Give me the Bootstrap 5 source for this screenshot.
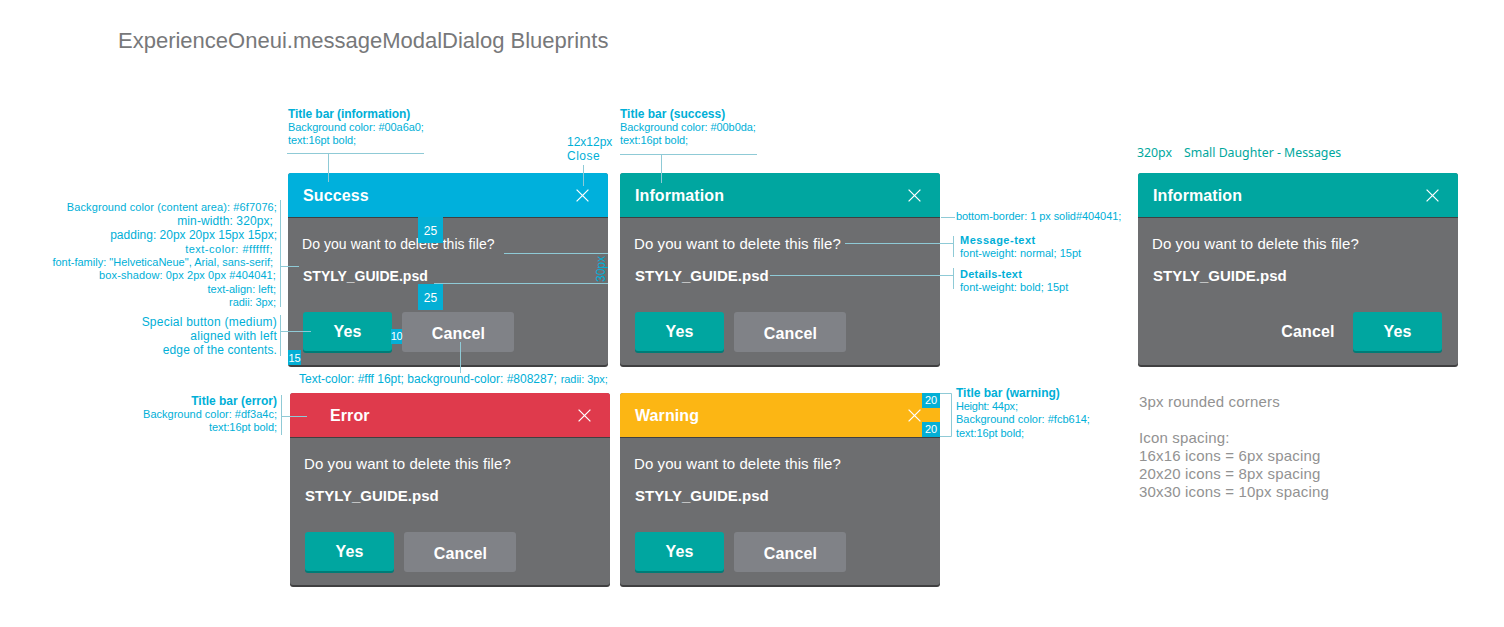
<!DOCTYPE html>
<html lang="en">
<head>
<meta charset="utf-8">
<meta name="viewport" content="width=device-width, initial-scale=1">
<title>ExperienceOneui.messageModalDialog Blueprints</title>
<link rel="stylesheet" href="https://cdn.jsdelivr.net/npm/bootstrap@5.3.0/dist/css/bootstrap.min.css">
<style>
  :root { --ink: #00afd7; --rule: #8fcad6; --teal: #00a6a0; --edge: #404041; }
  body { font-family: "Liberation Sans", Arial, sans-serif; background: #fff; }
  .board { width: 1504px; height: 627px; }
  .board-head { height: 100px; padding: 28px 0 0 118px; }
  .board-title { font-size: 22px; line-height: 26px; color: #77787a; }

  /* annotation text */
  .ann { font-size: 11px; line-height: 13px; color: var(--ink); white-space: nowrap; }
  .ann .l12 { font-size: 12px; line-height: 14px; }
  .ann .h14 { line-height: 14px; }
  .ann .h15 { line-height: 15px; }
  .ann .tight { letter-spacing: -.07px; }
  .ann .tighter { letter-spacing: -.24px; }
  .ann .open1 { letter-spacing: .1px; }
  .ann .open2 { letter-spacing: .23px; }
  .ann .open4 { letter-spacing: .5px; }
  .in1 { padding-right: 1px; }
  .in4 { padding-right: 4px; }

  .col-left { width: 288px; padding: 101px 11px 0 0; }
  .col-dialogs { width: 652px; }
  .col-right { width: 198px; padding-top: 110px; }
  .col-side { width: 320px; }
  .top-notes { height: 73px; padding-top: 7px; }
  .top-notes .n1 { width: 279px; }
  .top-notes .n2 { width: 53px; padding-top: 28px; }
  .between { height: 28px; padding: 7px 0 0 11px; }
  .row-a { gap: 12px; }
  .row-b { gap: 10px; padding-left: 2px; }
  .mt-a { margin-top: 1px; } .mt-b { margin-top: 6px; } .mt-c { margin-top: 36px; }
  .mt-d { margin-top: 11px; } .mt-e { margin-top: 8px; } .mt-f { margin-top: 92px; }

  /* dialogs */
  .dlg { width: 320px; height: 192px; border-radius: 3px; background: #6d6e70; box-shadow: 0 2px 0 var(--edge); color: #fff; }
  .dlg-bar { height: 45px; border-bottom: 1px solid var(--edge); border-radius: 3px 3px 0 0; padding: 0 19px 0 15px; font-size: 16px; font-weight: 700; letter-spacing: .1px; }
  .dlg-name { padding-top: 2px; }
  .dlg-bar svg { width: 13px; height: 13px; display: block; }
  .bar-success { background: #00b0dc; }
  .bar-info { background: var(--teal); }
  .bar-error { background: #df3a4c; }
  .bar-error .dlg-name { padding-left: 25px; }
  .bar-warning { background: #fcb614; }
  .dlg-body { padding: 16px 15px 0 14px; font-size: 15px; letter-spacing: .08px; line-height: 20px; }
  .dlg-compact .dlg-body { font-size: 14px; letter-spacing: .06px; }
  .dlg-file { padding: 12px 0 0 1px; letter-spacing: 0; }
  .dlg-actions { padding: 26px 0 0 1px; gap: 10px; }
  .act { border: 0; border-radius: 3px; height: 40px; padding: 0; font-size: 16px; font-weight: 700; line-height: 40px; color: #fff; letter-spacing: .15px; }
  .act-yes { width: 89px; height: 39px; background: var(--teal); box-shadow: 0 2px 0 #007c77; line-height: 39px; }
  .act-cancel { width: 112px; background: #808287; padding: 2px 0 0 1px; }
  .act-plain { width: 71px; height: 39px; line-height: 39px; background: transparent; padding-right: 1px; }
  .col-side .dlg-actions { gap: 9px; padding-right: 1px; }

  .side-cap { height: 73px; padding-top: 45px; font: 12.3px/15px "Noto Sans", sans-serif; color: #00a79d; gap: 12px; margin-left: -1px; }
  .side-notes { margin: 28px 0 0 1px; font-size: 15px; line-height: 18px; letter-spacing: .17px; color: #929292; }
  .side-notes p { margin-bottom: 18px; }

  /* overlays on top of the dialogs */
  .links { left: 0; top: 0; pointer-events: none; }
  .tag { position: absolute; background: #04afd5; color: #fff; font-size: 12px; display: flex; align-items: center; justify-content: center; }
  .tag-25a { left: 418px; top: 217px; width: 25px; height: 26px; padding-top: 1px; }
  .tag-25b { left: 418px; top: 284px; width: 25px; height: 26px; padding-top: 1px; }
  .tag-10 { left: 391px; top: 329px; width: 11px; height: 15px; font-size: 11px; letter-spacing: -.4px; }
  .tag-15 { left: 288px; top: 350px; width: 13px; height: 15px; font-size: 11px; padding-top: 1px; }
  .tag-20a { left: 922px; top: 393px; width: 18px; height: 15px; font-size: 11px; }
  .tag-20b { left: 922px; top: 422px; width: 18px; height: 15px; font-size: 11px; }
  .tag-gap { left: 594px; top: 255px; width: 14px; height: 27px; background: none; color: var(--ink); writing-mode: vertical-rl; transform: rotate(180deg); }
</style>
<script src="https://cdn.jsdelivr.net/npm/bootstrap@5.3.0/dist/js/bootstrap.bundle.min.js"></script>
</head>
<body>
<svg class="d-none"><symbol id="close" viewBox="0 0 13 13"><path d="M.6.6 12.4 12.4M12.4.6.6 12.4" stroke="#fff" stroke-width="1.25" fill="none"/></symbol></svg>

<div class="board position-relative overflow-hidden">
  <header class="board-head"><h1 class="board-title fw-normal m-0">ExperienceOneui.messageModalDialog Blueprints</h1></header>

  <main class="d-flex align-items-start">
    <aside class="col-left ann text-end flex-shrink-0">
      <div class="open1">Background color (content area): #6f7076;</div>
      <div class="l12 open1 in4">min-width: 320px;</div>
      <div class="l12 h15">padding: 20px 20px 15px 15px;</div>
      <div class="open4 in4">text-color: #ffffff;</div>
      <div class="in4">font-family: "HelveticaNeue", Arial, sans-serif;</div>
      <div class="open1 in1">box-shadow: 0px 2px 0px #404041;</div>
      <div class="mt-a in1">text-align: left;</div>
      <div class="tight in1">radii: 3px;</div>
      <div class="l12 open2 mt-b">Special button (medium)</div>
      <div class="l12 open2">aligned with left</div>
      <div class="l12 h15 open1">edge of the contents.</div>
      <div class="l12 fw-bold mt-c">Title bar (error)</div>
      <div>Background color: #df3a4c;</div>
      <div class="tight">text:16pt bold;</div>
    </aside>

    <section class="col-dialogs flex-shrink-0">
      <div class="top-notes d-flex ann">
        <div class="n1">
          <div class="l12 fw-bold tight">Title bar (information)</div>
          <div class="tight">Background color: #00a6a0;</div>
          <div class="tight">text:16pt bold;</div>
        </div>
        <div class="n2">
          <div class="l12">12x12px</div>
          <div class="l12 open4">Close</div>
        </div>
        <div>
          <div class="l12 fw-bold">Title bar (success)</div>
          <div class="tight">Background color: #00b0da;</div>
          <div class="tight">text:16pt bold;</div>
        </div>
      </div>

      <div class="row-a d-flex">
        <article class="dlg dlg-compact">
          <div class="dlg-bar bar-success d-flex align-items-center justify-content-between"><span class="dlg-name">Success</span><svg><use href="#close"/></svg></div>
          <div class="dlg-body">
            <div>Do you want to delete this file?</div>
            <div class="dlg-file fw-bold">STYLY_GUIDE.psd</div>
            <div class="dlg-actions d-flex"><button class="act act-yes">Yes</button><button class="act act-cancel">Cancel</button></div>
          </div>
        </article>
        <article class="dlg">
          <div class="dlg-bar bar-info d-flex align-items-center justify-content-between"><span class="dlg-name">Information</span><svg><use href="#close"/></svg></div>
          <div class="dlg-body">
            <div>Do you want to delete this file?</div>
            <div class="dlg-file fw-bold">STYLY_GUIDE.psd</div>
            <div class="dlg-actions d-flex"><button class="act act-yes">Yes</button><button class="act act-cancel">Cancel</button></div>
          </div>
        </article>
      </div>

      <div class="between ann d-flex align-items-baseline gap-1"><span class="l12">Text-color: #fff 16pt; background-color: #808287;</span><span class="tight">radii: 3px;</span></div>

      <div class="row-b d-flex">
        <article class="dlg">
          <div class="dlg-bar bar-error d-flex align-items-center justify-content-between"><span class="dlg-name">Error</span><svg><use href="#close"/></svg></div>
          <div class="dlg-body">
            <div>Do you want to delete this file?</div>
            <div class="dlg-file fw-bold">STYLY_GUIDE.psd</div>
            <div class="dlg-actions d-flex"><button class="act act-yes">Yes</button><button class="act act-cancel">Cancel</button></div>
          </div>
        </article>
        <article class="dlg">
          <div class="dlg-bar bar-warning d-flex align-items-center justify-content-between"><span class="dlg-name">Warning</span><svg><use href="#close"/></svg></div>
          <div class="dlg-body">
            <div>Do you want to delete this file?</div>
            <div class="dlg-file fw-bold">STYLY_GUIDE.psd</div>
            <div class="dlg-actions d-flex"><button class="act act-yes">Yes</button><button class="act act-cancel">Cancel</button></div>
          </div>
        </article>
      </div>
    </section>

    <aside class="col-right ann flex-shrink-0">
      <div class="ps-3 tight">bottom-border: 1 px solid#404041;</div>
      <div class="ps-3 ms-1 mt-d">
        <div class="fw-bold open4">Message-text</div>
        <div>font-weight: normal; 15pt</div>
      </div>
      <div class="ps-3 ms-1 mt-e">
        <div class="fw-bold open2">Details-text</div>
        <div>font-weight: bold; 15pt</div>
      </div>
      <div class="ps-3 mt-f">
        <div class="l12 fw-bold">Title bar (warning)</div>
        <div class="tighter">Height: 44px;</div>
        <div>Background color: #fcb614;</div>
        <div class="h14 tight">text:16pt bold;</div>
      </div>
    </aside>

    <section class="col-side flex-shrink-0">
      <div class="side-cap d-flex"><span>320px</span><span>Small Daughter - Messages</span></div>
      <article class="dlg">
        <div class="dlg-bar bar-info d-flex align-items-center justify-content-between"><span class="dlg-name">Information</span><svg><use href="#close"/></svg></div>
        <div class="dlg-body">
          <div>Do you want to delete this file?</div>
          <div class="dlg-file fw-bold">STYLY_GUIDE.psd</div>
          <div class="dlg-actions d-flex justify-content-end"><button class="act act-plain">Cancel</button><button class="act act-yes">Yes</button></div>
        </div>
      </article>
      <div class="side-notes">
        <p>3px rounded corners</p>
        <div>Icon spacing:</div>
        <div>16x16 icons = 6px spacing</div>
        <div>20x20 icons = 8px spacing</div>
        <div>30x30 icons = 10px spacing</div>
      </div>
    </section>
  </main>

  <span class="tag tag-25a">25</span>
  <span class="tag tag-25b">25</span>
  <span class="tag tag-10">10</span>
  <span class="tag tag-15">15</span>
  <span class="tag tag-20a">20</span>
  <span class="tag tag-20b">20</span>
  <span class="tag tag-gap">30px</span>

  <!-- leader lines from the annotations to the dialog parts -->
  <svg class="links position-absolute" width="1504" height="627" fill="none" stroke="#8fcad6" stroke-width="1">
    <path d="M287 153.500H424M328.500 154V182M583.500 165V186M620 154.500H757M661.500 155V183"/>
    <path d="M280.500 200V307M281 266.500H299M280.500 315V356M281 331.500H311M281.500 395V435M282 416.500H307"/>
    <path d="M504 253.500H608M434 283.500H608M460.500 342V373"/>
    <path d="M941 217.500H955M845 243.500H953M953.500 236V257M770 275.500H953M953.500 268V289M940 393.500H951.500V436.500H940"/>
  </svg>
</div>
</body>
</html>
